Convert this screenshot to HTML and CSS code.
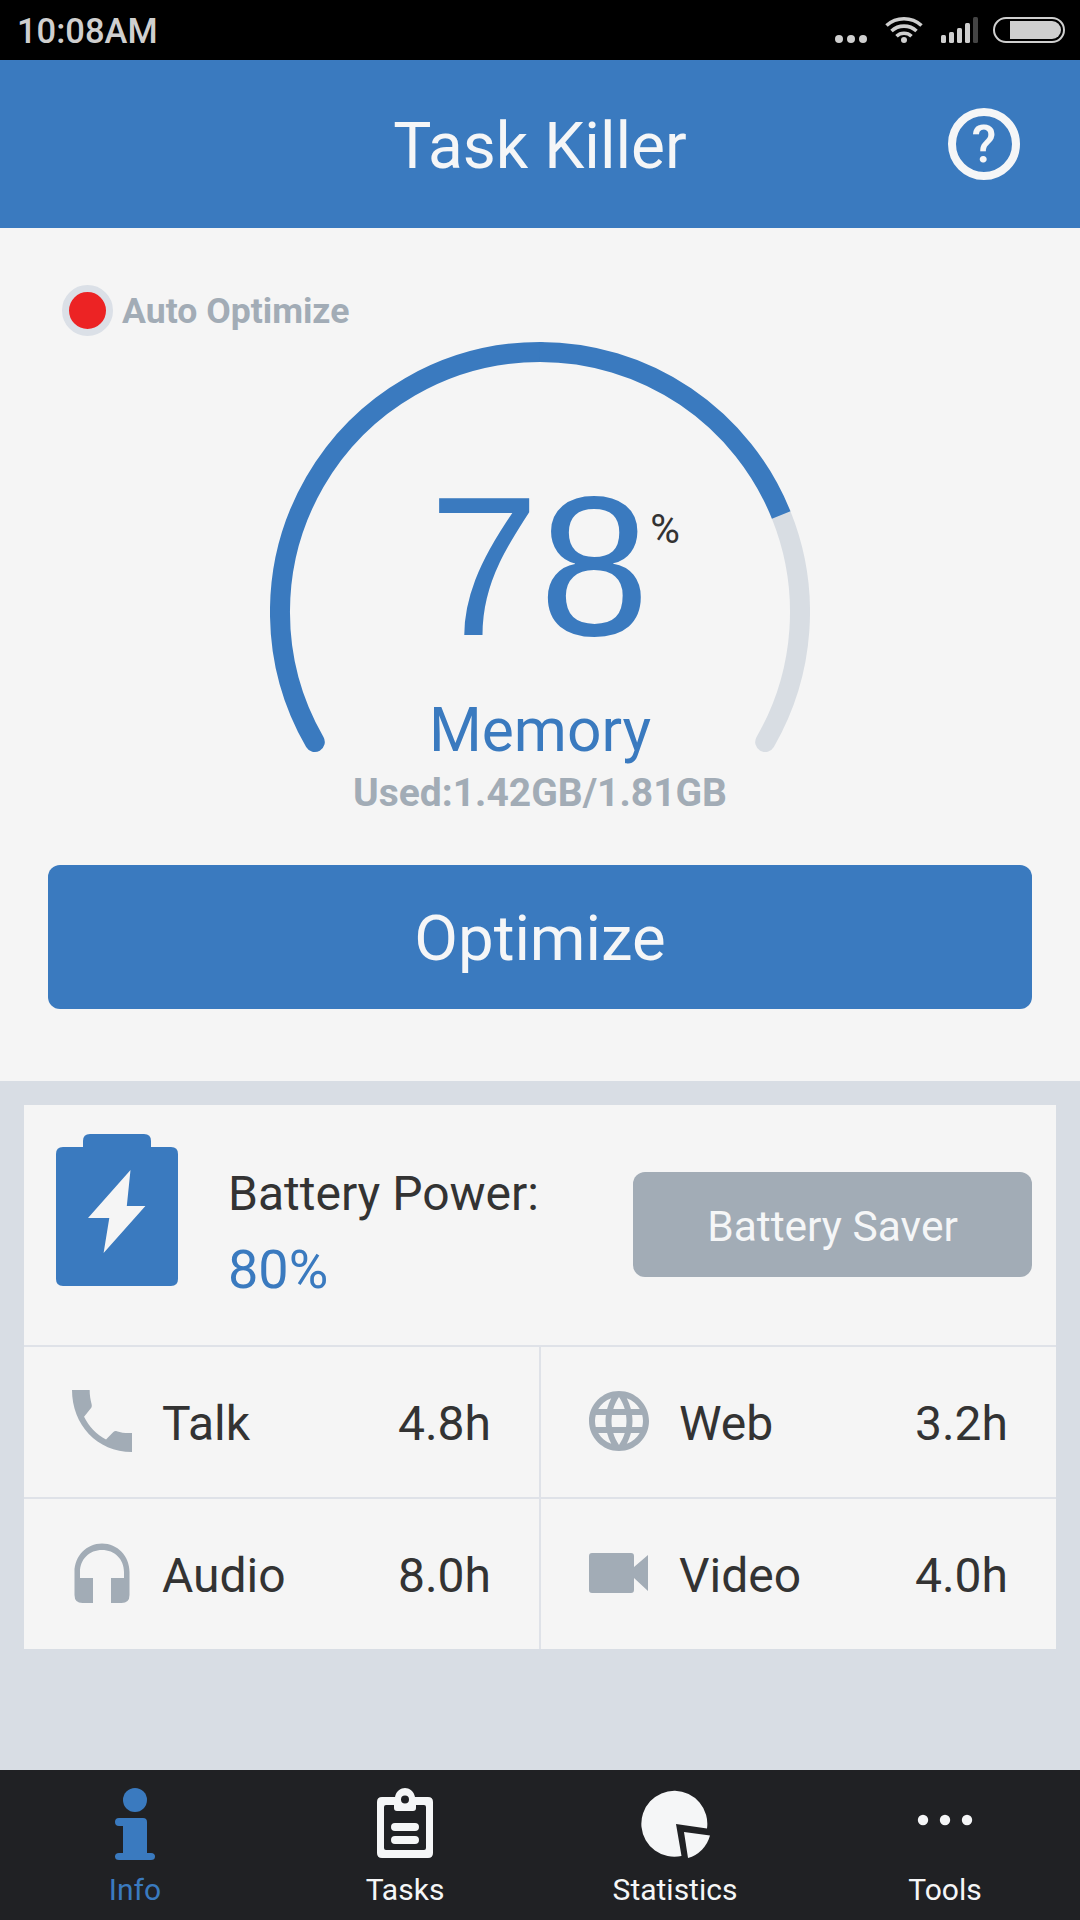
FILE: index.html
```html
<!DOCTYPE html>
<html>
    <head>
        <title>Task Killer</title>
        <meta charset="utf-8" />
        <meta name="viewport" content="width=device-width, initial-scale=1.0" />
        <link rel="stylesheet" href="styles.css">
    </head>
    <body>

        <div id="status">
            <span class="time">10:08AM</span>
            <svg width="230" height="32" viewBox="0 0 230 32">
                <g fill="#cfcfcf">
                    <circle cx="4" cy="25" r="4"/>
                    <circle cx="16" cy="25" r="4"/>
                    <circle cx="28" cy="25" r="4"/>
                    <circle cx="69" cy="26" r="3"/>
                    <rect x="106" y="21" width="5" height="8" rx="1.5"/>
                    <rect x="114" y="18" width="5" height="11" rx="1.5"/>
                    <rect x="122" y="14" width="5" height="15" rx="1.5"/>
                    <rect x="130" y="9" width="5" height="20" rx="1.5"/>
                    <rect x="138" y="3" width="5" height="26" rx="1.5" fill="#444"/>
                    <path d="M175 7h42a9 9 0 0 1 0 18h-42z"/>
                </g>
                <g fill="none" stroke="#cfcfcf">
                    <path stroke-width="3.6" d="M51.5 11.5a26 26 0 0 1 35 0M56.5 17a18.5 18.5 0 0 1 25 0M61.5 22.2a11 11 0 0 1 15 0"/>
                    <rect x="159" y="4" width="70" height="24" rx="12" stroke-width="2"/>
                </g>
            </svg>
        </div>
        <header>
            <h1>Task Killer</h1>
            <span id="help">?</span>
        </header>
        <main>
            <section id="memory">
                <div class="auto"><i class="dot"></i><span>Auto Optimize</span></div>
                <div class="gauge">
                    <svg width="540" height="420" viewBox="0 0 540 420" fill="none" stroke-width="20">
                        <path stroke="#d8dde3" stroke-linecap="round" d="M495.2 400A260 260 0 0 0 511.2 173"/>
                        <path stroke="#3a7abf" stroke-linecap="round" d="M44.8 400A260 260 0 0 1 270 10"/>
                        <path stroke="#3a7abf" d="M270 10A260 260 0 0 1 511.2 173"/>
                    </svg>
                    <div class="reading">
                        <div class="value">78<span class="unit">%</span></div>
                        <div class="name">Memory</div>
                    </div>
                </div>
                <div class="used">Used:1.42GB/1.81GB</div>
                <button id="optimize">Optimize</button>
            </section>
            <section id="battery">
                <div class="power">
                    <svg width="122" height="152" viewBox="0 0 122 152">
                        <path fill="#3a7abf" d="M7 13h20V7q0-7 7-7h54q7 0 7 7v6h20q7 0 7 7v125q0 7-7 7H7q-7 0-7-7V20q0-7 7-7z"/>
                        <path fill="#f5f5f5" d="M74.5 36l-3.7 36h18.600l-41.800 47 5.700-35H32z"/>
                    </svg>
                    <div class="level">
                        <span>Battery Power:</span>
                        <span class="percent">80%</span>
                    </div>
                    <button id="saver">Battery Saver</button>
                </div>
                <div class="item">
                    <svg width="60" height="62" viewBox="3 3 18 18" preserveAspectRatio="none"><path d="M6.620 10.790c1.440 2.830 3.760 5.140 6.590 6.590l2.200-2.200c.27-.27.67-.36 1.020-.24 1.120.37 2.330.57 3.570.57.550 0 1 0 1 0V21c-10.500 0-18-8-18-18h5.300c0 1.500.2 2.700.6 4.200.1.500 0 .9-.3 1.200z"/></svg>
                    <span class="name">Talk</span><span>4.8h</span>
                </div>
                <div class="item">
                    <svg width="60" height="60" viewBox="2 2 20 20"><path d="M11.990 2C6.470 2 2 6.480 2 12s4.470 10 9.990 10C17.520 22 22 17.520 22 12S17.520 2 11.990 2zm6.930 6h-2.950c-.32-1.250-.78-2.450-1.380-3.560 1.840.63 3.370 1.910 4.330 3.560zM12 4.040c.83 1.200 1.480 2.530 1.910 3.960h-3.820c.43-1.430 1.080-2.760 1.910-3.960zM4.260 14C4.100 13.360 4 12.690 4 12s.1-1.360.26-2h3.380c-.08.66-.14 1.320-.14 2s.06 1.340.14 2H4.260zm.82 2h2.950c.32 1.250.78 2.450 1.380 3.560-1.840-.63-3.370-1.900-4.330-3.560zm2.950-8H5.080c.96-1.660 2.490-2.930 4.330-3.560C8.810 5.550 8.350 6.750 8.030 8zM12 19.960c-.83-1.200-1.480-2.530-1.910-3.960h3.820c-.43 1.430-1.080 2.760-1.910 3.960zM14.340 14H9.660c-.09-.66-.16-1.320-.16-2s.07-1.350.16-2h4.680c.09.65.16 1.320.16 2s-.07 1.340-.16 2zm.25 5.560c.6-1.110 1.060-2.310 1.380-3.560h2.950c-.96 1.650-2.490 2.930-4.330 3.560zM16.360 14c.08-.66.14-1.320.14-2s-.06-1.340-.14-2h3.380c.16.64.26 1.310.26 2s-.1 1.360-.26 2h-3.380z"/></svg>
                    <span class="name">Web</span><span>3.2h</span>
                </div>
                <div class="item">
                    <svg width="60" height="60" viewBox="0 0 60 60"><path d="M2.500 29C2.500 13 14.500.500 30 .500S57.500 13 57.500 29v23q0 8-8 8H39V35h13v-6C52 16 42.500 7 30 7S8 16 8 29v6h13v25H10.500q-8 0-8-8z"/></svg>
                    <span class="name">Audio</span><span>8.0h</span>
                </div>
                <div class="item">
                    <svg width="60" height="60" viewBox="0 0 60 60"><path d="M3 10h39q3 0 3 3v11L59 12v36L45 35v12q0 3-3 3H3q-3 0-3-3V13q0-3 3-3z"/></svg>
                    <span class="name">Video</span><span>4.0h</span>
                </div>
            </section>
        </main>
        <nav>
            <a class="active">
                <svg width="72" height="72" viewBox="0 0 72 72"><circle cx="36" cy="12" r="12"/><path d="M20 30h24q4 0 4 4v31h4q4 0 4 3.500t-4 3.500H20q-4 0-4-3.500t4-3.500h4V38h-4q-4 0-4-4t4-4z"/></svg>
                Info
            </a>
            <a>
                <svg width="72" height="72" viewBox="0 0 72 72"><path fill-rule="evenodd" d="M13 9h13c1-6 6-9 10-9s9 3 10 9h13q5 0 5 5v51q0 5-5 5H13q-5 0-5-5V14q0-5 5-5zm4 8q-2 0-2 2v41q0 2 2 2h38q2 0 2-2V19q0-2-2-2h-8v3q0 3-3 3H28q-3 0-3-3v-3zM36 7.500a4 4 0 1 0 0 8 4 4 0 0 0 0-8z"/><path d="M26 35h20a4 4 0 0 1 0 8H26a4 4 0 0 1 0-8zM26 48h20a4 4 0 0 1 0 8H26a4 4 0 0 1 0-8z"/></svg>
                Tasks
            </a>
            <a>
                <svg width="72" height="72" viewBox="0 0 72 72"><path d="M37 36l31 4.500A33 33 0 1 0 42.500 68z"/><path d="M45 44l26 3.500A32 32 0 0 1 49 70z"/></svg>
                Statistics
            </a>
            <a>
                <svg width="72" height="72" viewBox="0 0 72 72"><circle cx="14" cy="32" r="5.200"/><circle cx="36" cy="32" r="5.200"/><circle cx="58" cy="32" r="5.200"/></svg>
                Tools
            </a>
        </nav>

    </body>
</html>
```
FILE: styles.css
```css
html, body {
    height: 100%;
    margin: 0;
    padding: 0;
}
body {
    display: flex;
    flex-direction: column;
    color: #333;
    background-color: #d8dde4;
    font-family: Roboto, "Liberation Sans", sans-serif;
    font-size: 48px;
    line-height: 1;
}
svg {
    flex: none;
    display: block;
}
button {
    font-family: inherit;
    color: #f5f6f7;
    border: none;
    border-radius: 12px;
    padding: 3px 0 0;
}
#status {
    display: flex;
    justify-content: space-between;
    align-items: center;
    box-sizing: border-box;
    height: 60px;
    padding: 0 15px 0 17px;
    background-color: #000;
}
#status .time {
    padding-top: 2px;
    color: #cfcfcf;
    font-size: 34.5px;
    font-weight: 500;
}
header {
    display: grid;
    grid-template-columns: 72px 1fr 72px;
    align-items: center;
    height: 168px;
    padding: 0 60px;
    color: #f5f6f7;
    background-color: #3a7abf;
}
h1 {
    grid-column: 2;
    margin: 0;
    padding-top: 5px;
    font-size: 64px;
    font-weight: 400;
    text-align: center;
}
#help {
    box-sizing: border-box;
    width: 72px;
    height: 72px;
    border: 8.5px solid #f5f6f7;
    border-radius: 50%;
    font-size: 51px;
    font-weight: 500;
    line-height: 58px;
    text-align: center;
}
main {
    flex: 1;
}
#memory {
    display: flex;
    flex-direction: column;
    align-items: center;
    box-sizing: border-box;
    height: 853px;
    padding: 56px 48px 0;
    background-color: #f5f5f5;
}
.auto {
    display: flex;
    align-items: center;
    align-self: flex-start;
    height: 52px;
    margin-left: 14px;
    color: #a2acb6;
    font-size: 35.6px;
    font-weight: 700;
}
.auto span {
    padding-top: 4px;
}
.auto .dot {
    width: 37px;
    height: 37px;
    margin-right: 9px;
    border: 7px solid #dbe0e7;
    border-radius: 50%;
    background-color: #ec2324;
}
.gauge {
    display: grid;
    margin-top: 6px;
}
.gauge svg, .reading {
    grid-area: 1 / 1;
}
.reading {
    color: #3a7abf;
    text-align: center;
}
.reading .value {
    display: flex;
    justify-content: center;
    margin-top: 126px;
    margin-left: 29px;
    font-family: "Liberation Sans", sans-serif;
    font-size: 198px;
}
.reading .unit {
    margin-top: 41px;
    margin-left: 1px;
    color: #333;
    font-family: Roboto, sans-serif;
    font-size: 40.5px;
}
.reading .name {
    margin-top: 35px;
    font-size: 60.5px;
}
.used {
    margin-top: 12px;
    color: #a2acb6;
    font-size: 39px;
    font-weight: 700;
}
#optimize {
    width: 984px;
    height: 144px;
    margin-top: 52px;
    background-color: #3a7abf;
    font-size: 63.5px;
}
#battery {
    display: grid;
    grid-template-columns: 1fr 1fr;
    gap: 2px;
    margin: 24px;
    background-color: #dfe2e8;
}
.power {
    grid-column: 1 / 3;
    display: flex;
    align-items: flex-start;
    box-sizing: border-box;
    height: 240px;
    padding: 29px 24px 0 32px;
    background-color: #f5f5f5;
}
.level {
    display: flex;
    flex-direction: column;
    margin: 36px 0 0 50px;
}
.level .percent {
    margin-top: 25px;
    color: #3a7abf;
    font-size: 54px;
}
#saver {
    width: 399px;
    height: 105px;
    margin: 38px 0 0 auto;
    background-color: #a2acb6;
    font-size: 42.5px;
}
.item {
    display: flex;
    align-items: center;
    height: 150px;
    padding: 0 48px;
    background-color: #f5f5f5;
}
.item svg {
    margin-bottom: 3px;
    fill: #a2acb6;
}
.item span {
    padding-top: 4px;
}
.item .name {
    flex: 1;
    margin-left: 30px;
}
nav {
    display: grid;
    grid-template-columns: repeat(4, 1fr);
    height: 150px;
    background-color: #202124;
}
nav a {
    display: flex;
    flex-direction: column;
    align-items: center;
    gap: 15px;
    padding-top: 18px;
    color: #f5f6f7;
    font-size: 30px;
}
nav svg {
    fill: #f5f6f7;
}
nav .active {
    color: #3a7abf;
}
nav .active svg {
    fill: #3a7abf;
}
```
